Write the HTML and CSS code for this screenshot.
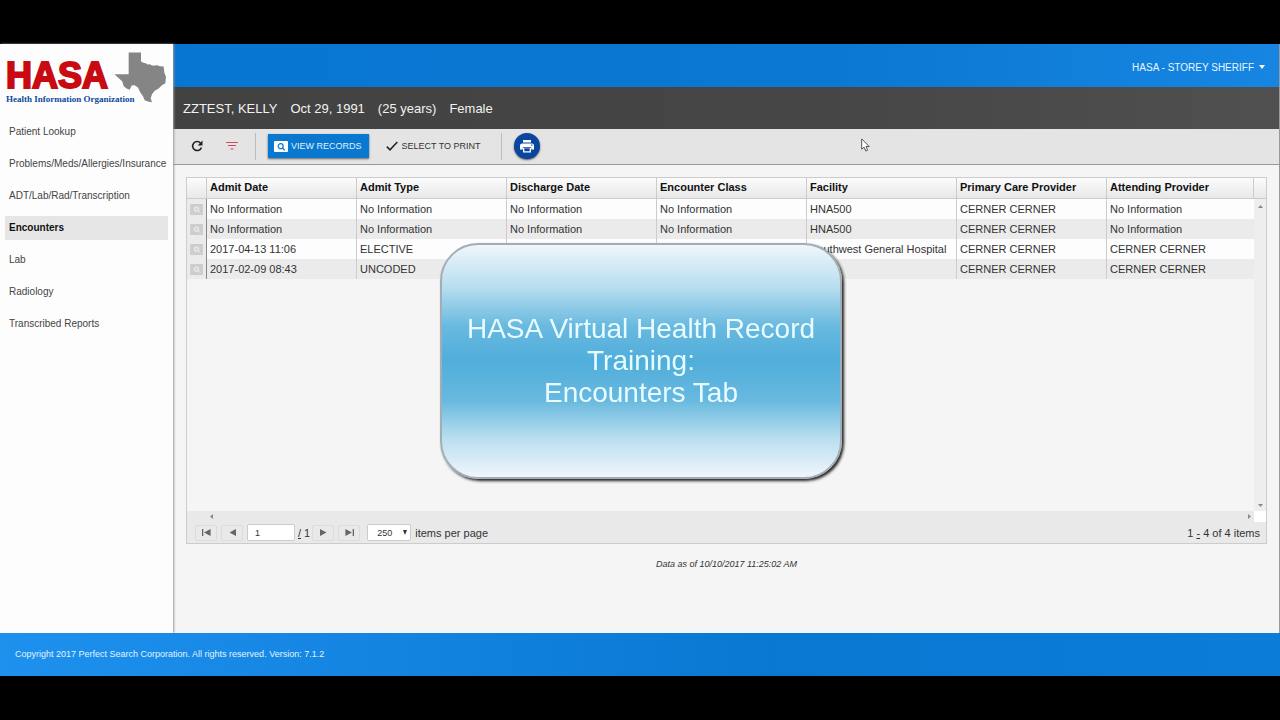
FILE: index.html
```html
<!DOCTYPE html>
<html lang="en">
<head>
<meta charset="utf-8">
<meta name="viewport" content="width=device-width, initial-scale=1">
<title>HASA Virtual Health Record</title>
<link rel="stylesheet" href="styles.css">
</head>
<body>
<div class="app">
  <div class="main">
    <aside class="sidebar">
      <div class="logo">
        <div class="logo-words">
          <span class="logo-name">HASA</span>
          <span class="logo-sub">Health Information Organization</span>
        </div>
        <svg class="logo-state" viewBox="0 0 156 152" aria-hidden="true"><path fill="#858585" d="M44 1H81V28L88 32 95 33 101 37 108 36 114 40 123 40 130 39 138 42 149 43 151 62 156 74 154 93 143 100 134 109 122 116 114 126 110 138 114 150 104 149 92 144 87 132 79 121 72 106 62 99 53 100 47 113 39 110 29 102 25 88 13 77 1 66H44Z"/></svg>
      </div>
      <nav class="nav">
        <a href="#">Patient Lookup</a>
        <a href="#">Problems/Meds/Allergies/Insurance</a>
        <a href="#">ADT/Lab/Rad/Transcription</a>
        <a href="#" class="active" aria-current="page">Encounters</a>
        <a href="#">Lab</a>
        <a href="#">Radiology</a>
        <a href="#">Transcribed Reports</a>
      </nav>
    </aside>
    <div class="content">
      <header class="topbar">
        <button class="account" type="button">HASA - STOREY SHERIFF <span class="caret"></span></button>
      </header>
      <div class="patient">
        <span>ZZTEST, KELLY</span><span>Oct 29, 1991</span><span>(25 years)</span><span>Female</span>
      </div>
      <div class="toolbar">
        <button class="icon-btn" type="button" aria-label="Refresh">
          <svg width="12" height="12" viewBox="0 0 12 12"><path d="M9.6 3.2A4.5 4.5 0 1 0 10.4 7.4" fill="none" stroke="#222" stroke-width="1.6"/><path d="M11.5.5V5.5H6.7Z" fill="#222"/></svg>
        </button>
        <button class="icon-btn" type="button" aria-label="Filter">
          <svg width="14" height="10" viewBox="0 0 14 10"><path d="M1 1.5H13M3 4.5H11M5.5 8H8.5" stroke="#d04a5e" stroke-width="1.1"/></svg>
        </button>
        <span class="divider"></span>
        <button class="view-btn" type="button">
          <svg width="14" height="11" viewBox="0 0 14 11"><rect width="14" height="11" rx="1" fill="#fff"/><circle cx="6.7" cy="5.2" r="2.5" fill="none" stroke="#0b78d0" stroke-width="1.2"/><path d="M8.3 6.8 10.6 9.2" stroke="#0b78d0" stroke-width="1.3"/></svg>
          VIEW RECORDS
        </button>
        <button class="select-btn" type="button">
          <svg width="12" height="10" viewBox="0 0 12 10"><path d="M.8 5.6 4 8.8 11.3 1" fill="none" stroke="#222" stroke-width="1.5"/></svg>
          SELECT TO PRINT
        </button>
        <span class="divider"></span>
        <button class="print-btn" type="button" aria-label="Print">
          <svg width="14" height="13" viewBox="0 0 14 13"><path fill="#fff" d="M3 0H11V2.6H3ZM2 3.4H12A2 2 0 0 1 14 5.4V9.6H11.2V7.2H2.8V9.6H0V5.4A2 2 0 0 1 2 3.4ZM3 8H11V12.6H3Z"/><path fill="#0a45a0" d="M4.3 8.2H9.7V11.2H4.3ZM11.2 4.6h1.2v1.2h-1.2z"/></svg>
        </button>
      </div>
      <main class="page">
        <section class="grid">
          <div class="grid-body">
            <div class="table-wrap">
              <table>
                <colgroup><col class="col-icon"><col class="col-data" span="6"><col></colgroup>
                <thead>
                  <tr><th aria-label="View"></th><th>Admit Date</th><th>Admit Type</th><th>Discharge Date</th><th>Encounter Class</th><th>Facility</th><th>Primary Care Provider</th><th>Attending Provider</th></tr>
                </thead>
                <tbody>
                  <tr><td><svg class="rec" viewBox="0 0 14 12"><path d="M0 0H14V12H0Z" fill="#cdcdcd"/><circle cx="7" cy="5.6" r="2.6" fill="#d8d8d8" stroke="#f0f0f0"/><path d="m9 7.6 2 2" stroke="#f0f0f0"/></svg></td><td>No Information</td><td>No Information</td><td>No Information</td><td>No Information</td><td>HNA500</td><td>CERNER CERNER</td><td>No Information</td></tr>
                  <tr><td><svg class="rec" viewBox="0 0 14 12"><path d="M0 0H14V12H0Z" fill="#cdcdcd"/><circle cx="7" cy="5.6" r="2.6" fill="#d8d8d8" stroke="#f0f0f0"/><path d="m9 7.6 2 2" stroke="#f0f0f0"/></svg></td><td>No Information</td><td>No Information</td><td>No Information</td><td>No Information</td><td>HNA500</td><td>CERNER CERNER</td><td>No Information</td></tr>
                  <tr><td><svg class="rec" viewBox="0 0 14 12"><path d="M0 0H14V12H0Z" fill="#cdcdcd"/><circle cx="7" cy="5.6" r="2.6" fill="#d8d8d8" stroke="#f0f0f0"/><path d="m9 7.6 2 2" stroke="#f0f0f0"/></svg></td><td>2017-04-13 11:06</td><td>ELECTIVE</td><td></td><td></td><td>Southwest General Hospital</td><td>CERNER CERNER</td><td>CERNER CERNER</td></tr>
                  <tr><td><svg class="rec" viewBox="0 0 14 12"><path d="M0 0H14V12H0Z" fill="#cdcdcd"/><circle cx="7" cy="5.6" r="2.6" fill="#d8d8d8" stroke="#f0f0f0"/><path d="m9 7.6 2 2" stroke="#f0f0f0"/></svg></td><td>2017-02-09 08:43</td><td>UNCODED</td><td></td><td></td><td></td><td>CERNER CERNER</td><td>CERNER CERNER</td></tr>
                </tbody>
              </table>
            </div>
            <div class="vscroll">
              <span class="vscroll-head"></span>
              <div class="vscroll-track">
                <svg width="5" height="3" viewBox="0 0 5 3"><path d="M0 3 2.5 0 5 3Z" fill="#888"/></svg>
                <svg width="5" height="3" viewBox="0 0 5 3"><path d="M0 0 2.5 3 5 0Z" fill="#888"/></svg>
              </div>
            </div>
          </div>
          <div class="hscroll">
            <div class="hscroll-track">
              <svg width="3" height="5" viewBox="0 0 3 5"><path d="M3 0 0 2.5 3 5Z" fill="#888"/></svg>
              <svg width="3" height="5" viewBox="0 0 3 5"><path d="M0 0 3 2.5 0 5Z" fill="#888"/></svg>
            </div>
            <span class="corner"></span>
          </div>
          <div class="pager">
            <button type="button" aria-label="First page"><svg width="9" height="7" viewBox="0 0 9 7"><path d="M0 0H1.3V7H0ZM8.6 0V7L2 3.5Z" fill="#666"/></svg></button>
            <button type="button" aria-label="Previous page"><svg width="7" height="7" viewBox="0 0 7 7"><path d="M7 0V7L.5 3.5Z" fill="#666"/></svg></button>
            <input type="text" value="1" aria-label="Page number">
            <span class="total"><u>/</u> 1</span>
            <button type="button" aria-label="Next page"><svg width="7" height="7" viewBox="0 0 7 7"><path d="M0 0V7L6.5 3.5Z" fill="#666"/></svg></button>
            <button type="button" aria-label="Last page"><svg width="9" height="7" viewBox="0 0 9 7"><path d="M9 0H7.7V7H9ZM.4 0V7L7 3.5Z" fill="#666"/></svg></button>
            <label class="size"><span class="select"><select><option>250</option></select></span>items per page</label>
            <span class="count">1 <u>-</u> 4 of 4 items</span>
          </div>
        </section>
        <p class="asof">Data as of 10/10/2017 11:25:02 AM</p>
      </main>
    </div>
  </div>
  <footer class="footer">Copyright 2017 Perfect Search Corporation. All rights reserved. Version: 7.1.2</footer>
</div>
<div class="overlay">
  <div class="title-card"><h1>HASA Virtual Health Record<br>Training:<br>Encounters Tab</h1></div>
</div>
<svg class="cursor" width="9" height="14" viewBox="0 0 9 14" aria-hidden="true"><path d="M.7.9V11.2L3.1 9.2 4.8 13 6.6 12.2 5 8.5H8.2Z" fill="#fff" stroke="#444" stroke-width=".9"/></svg>
</body>
</html>
```
FILE: styles.css
```css
* { box-sizing: border-box; }
body {
  margin: 0;
  min-height: 100vh;
  padding: 44px 0;
  display: flex;
  background: #000;
  color: #333;
  font-family: "Liberation Sans", Arial, sans-serif;
  font-size: 11px;
}
button, input, select { font: inherit; color: inherit; }
button { border: 0; padding: 0; background: none; display: flex; align-items: center; }
svg { display: block; flex: none; }

.app { flex: 1; min-width: 0; display: flex; flex-direction: column; }
.main { flex: 1; display: flex; }

.sidebar {
  flex: 0 0 173px;
  background: #fdfdfd;
  box-shadow: 1px 0 2px #999;
  position: relative;
  z-index: 1;
}
.logo { display: flex; height: 72px; padding: 8px 0 0 6px; }
.logo-words { display: flex; flex-direction: column; width: 108px; padding-top: 6px; white-space: nowrap; }
.logo-name {
  font-size: 36px;
  line-height: 36px;
  font-weight: bold;
  color: #c90a12;
  -webkit-text-stroke: 2px #c90a12;
}
.logo-sub {
  font-family: "Liberation Serif", "Times New Roman", serif;
  font-size: 9px;
  line-height: 10px;
  font-weight: bold;
  color: #0d4a9c;
}
.logo-state { width: 52px; height: 51px; }
.nav { display: flex; flex-direction: column; gap: 8px; padding: 4px 5px 0; }
.nav a {
  height: 24px;
  line-height: 24px;
  padding-left: 4px;
  font-size: 10px;
  color: #444;
  text-decoration: none;
  white-space: nowrap;
}
.nav .active { background: #e6e6e6; color: #111; font-weight: bold; }

.content { flex: 1; min-width: 0; display: flex; flex-direction: column; background: #f5f5f5; border-right: 1px solid #999; }
.topbar {
  height: 43px;
  display: flex;
  align-items: center;
  justify-content: flex-end;
  padding: 3px 14px 0 0;
  background: linear-gradient(90deg, #0776d2, #0b78d3 60%, #1686e2);
}
.account { gap: 5px; color: #e8f6ff; font-size: 10px; }
.caret { border: 3px solid transparent; border-top: 4px solid #fff; border-bottom: 0; }
.patient {
  height: 42px;
  display: flex;
  align-items: center;
  gap: 13px;
  padding-left: 10px;
  background: linear-gradient(90deg, #424242, #464646 60%, #505050);
  color: #f2f2f2;
  font-size: 13px;
}
.toolbar {
  height: 36px;
  display: flex;
  align-items: center;
  padding: 0 0 1px 12px;
  background: #e4e4e4;
  border-bottom: 1px solid #999;
}
.icon-btn { width: 24px; height: 24px; justify-content: center; margin-right: 11px; }
.divider { width: 1px; height: 27px; background: #bbb; }
.view-btn {
  height: 24px;
  gap: 3px;
  margin: 0 17px 0 12px;
  padding: 0 7px 0 6px;
  background: #0b78d0;
  color: #dff2ff;
  font-size: 9px;
  box-shadow: 0 1px 2px #666;
}
.select-btn { gap: 4px; margin-right: 20px; font-size: 9px; }
.print-btn {
  width: 26px;
  height: 26px;
  margin-left: 12px;
  justify-content: center;
  border-radius: 50%;
  background: #0a45a0;
  box-shadow: 0 1px 2px #555;
}

.page { flex: 1; padding: 12px 12px 0 13px; }
.grid { border: 1px solid #ccc; background: #f5f5f5; }
.grid-body { display: flex; min-height: 333px; }
.table-wrap { flex: 1; min-width: 0; }
table { width: 100%; table-layout: fixed; border-collapse: separate; border-spacing: 0; }
.col-icon { width: 20px; }
.col-data { width: 150px; }
th, td {
  height: 20px;
  padding: 0 0 0 3px;
  border-right: 1px solid #ccc;
  text-align: left;
  white-space: nowrap;
}
th { height: 21px; background: linear-gradient(#fcfcfc, #e8e8e8); border-bottom: 1px solid #ccc; color: #111; padding-bottom: 2px; }
tbody tr { background: #fdfdfd; }
tbody tr:nth-child(even) { background: #ebebeb; }
td:first-child { background: #ebebeb; border-right-color: #888; }
td:last-child { border-right: 0; }
.rec { width: 13px; height: 11px; }
.vscroll { width: 12px; display: flex; flex-direction: column; }
.vscroll-head { height: 21px; background: linear-gradient(#fcfcfc, #e8e8e8); border-bottom: 1px solid #ccc; }
.vscroll-track {
  flex: 1;
  display: flex;
  flex-direction: column;
  align-items: center;
  justify-content: space-between;
  padding: 6px 0 4px;
  background: #eee;
}
.hscroll { display: flex; height: 11px; }
.hscroll-track { flex: 1; display: flex; align-items: center; justify-content: space-between; padding: 0 3px 0 23px; background: #e9e9e9; }
.corner { width: 12px; background: #fff; }
.pager {
  height: 21px;
  display: flex;
  align-items: center;
  padding: 0 6px 0 8px;
  background: #e9e9e9;
}
.pager button { width: 22px; height: 16px; margin-right: 4px; justify-content: center; border: 1px solid #dcdcdc; border-radius: 2px; }
.pager input { width: 48px; height: 17px; padding: 0 7px; border: 1px solid #ccc; border-radius: 2px; background: #fff; font-size: 9px; }
.total { margin: 0 2px 0 3px; }
.size { display: flex; align-items: center; gap: 4px; margin-left: 3px; }
.select { display: flex; align-items: center; position: relative; }
.select::after {
  content: "";
  position: absolute;
  right: 4px;
  border: 2px solid transparent;
  border-top: 5px solid #333;
  border-bottom: 0;
}
.select select { appearance: none; width: 44px; height: 17px; padding: 0 9px; border: 1px solid #ccc; border-radius: 2px; background: #fff; font-size: 9px; }
.count { margin-left: auto; }
.asof { margin: 14px 0; text-align: center; font-size: 9px; line-height: 12px; font-style: italic; }

.footer {
  height: 43px;
  padding-left: 15px;
  line-height: 43px;
  background: linear-gradient(90deg, #1e90ee, #0878d3 60%, #0b7cd8);
  color: #e0f5ff;
  font-size: 9px;
  position: relative;
  z-index: 2;
}

/* Title card shown over the page */
.overlay { position: fixed; inset: 0; z-index: 5; display: grid; place-items: center; padding: 2px 0 0 2px; pointer-events: none; }
.title-card {
  width: 402px;
  height: 236px;
  display: grid;
  place-items: center;
  border: 2px solid #a3adb5;
  border-radius: 38px;
  background: linear-gradient(#f0f6fb, #b8deef 18%, #68b9df 35%, #50aedb 50%, #68b9df 67%, #b8deef 83%, #f0f6fc);
  box-shadow: 2px 2px 3px #222;
}
.title-card h1 { margin: 0; font-size: 28px; line-height: 32px; font-weight: normal; text-align: center; color: #e8fbff; }
.cursor { position: absolute; left: 861px; top: 138px; z-index: 6; }
```
